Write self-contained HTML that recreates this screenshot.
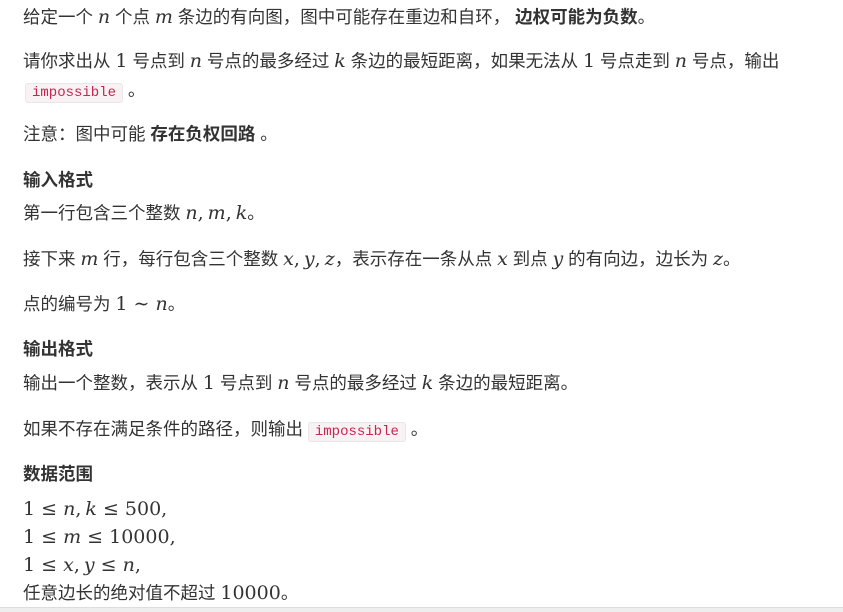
<!DOCTYPE html>
<html><head><meta charset="utf-8"><style>
body{margin:0;width:843px;height:611px;background:#fff;overflow:hidden;position:relative;font-family:"Liberation Sans","Noto Sans CJK SC",sans-serif;font-size:17.5px;color:#333;}
.l{position:absolute;left:23px;white-space:nowrap;line-height:24px;}
i,.m{font-family:"DejaVu Serif","Liberation Serif",serif;font-size:19px;}
i{font-style:italic;}
.c{margin-right:4px;}
b{font-weight:bold;}
code{font-family:"Liberation Mono",monospace;font-size:14px;color:#c7254e;background:#f9f2f4;border:1px solid #e8e8e8;border-radius:3px;padding:1px 6px;}
.bar{position:absolute;left:0;right:0;top:607px;height:4px;background:#eee;border-top:1px solid #ddd;}
</style></head><body>
<div class="l" style="top:5px">给定一个 <i>n</i> 个点 <i>m</i> 条边的有向图，图中可能存在重边和自环， <b>边权可能为负数</b>。</div>
<div class="l" style="top:49px">请你求出从 <span class="m">1</span> 号点到 <i>n</i> 号点的最多经过 <i>k</i> 条边的最短距离，如果无法从 <span class="m">1</span> 号点走到 <i>n</i> 号点，输出</div>
<div class="l" style="top:78px;left:25px"><code>impossible</code> 。</div>
<div class="l" style="top:122px">注意：图中可能 <b>存在负权回路</b> 。</div>
<div class="l" style="top:168px"><b>输入格式</b></div>
<div class="l" style="top:201px">第一行包含三个整数 <i>n</i><span class="m c">,</span><i>m</i><span class="m c">,</span><i>k</i>。</div>
<div class="l" style="top:247px">接下来 <i>m</i> 行，每行包含三个整数 <i>x</i><span class="m c">,</span><i>y</i><span class="m c">,</span><i>z</i>，表示存在一条从点 <i>x</i> 到点 <i>y</i> 的有向边，边长为 <i>z</i>。</div>
<div class="l" style="top:292px">点的编号为 <span class="m">1 ∼ </span><i>n</i>。</div>
<div class="l" style="top:337px"><b>输出格式</b></div>
<div class="l" style="top:371px">输出一个整数，表示从 <span class="m">1</span> 号点到 <i>n</i> 号点的最多经过 <i>k</i> 条边的最短距离。</div>
<div class="l" style="top:417px">如果不存在满足条件的路径，则输出 <code>impossible</code> 。</div>
<div class="l" style="top:462px"><b>数据范围</b></div>
<div class="l" style="top:497px"><span class="m">1 ≤ </span><i>n</i><span class="m c">,</span><i>k</i><span class="m"> ≤ 500,</span></div>
<div class="l" style="top:525px"><span class="m">1 ≤ </span><i>m</i><span class="m"> ≤ 10000,</span></div>
<div class="l" style="top:553px"><span class="m">1 ≤ </span><i>x</i><span class="m c">,</span><i>y</i><span class="m"> ≤ </span><i>n</i><span class="m">,</span></div>
<div class="l" style="top:581px">任意边长的绝对值不超过 <span class="m">10000</span>。</div>
<div class="bar"></div>
</body></html>
